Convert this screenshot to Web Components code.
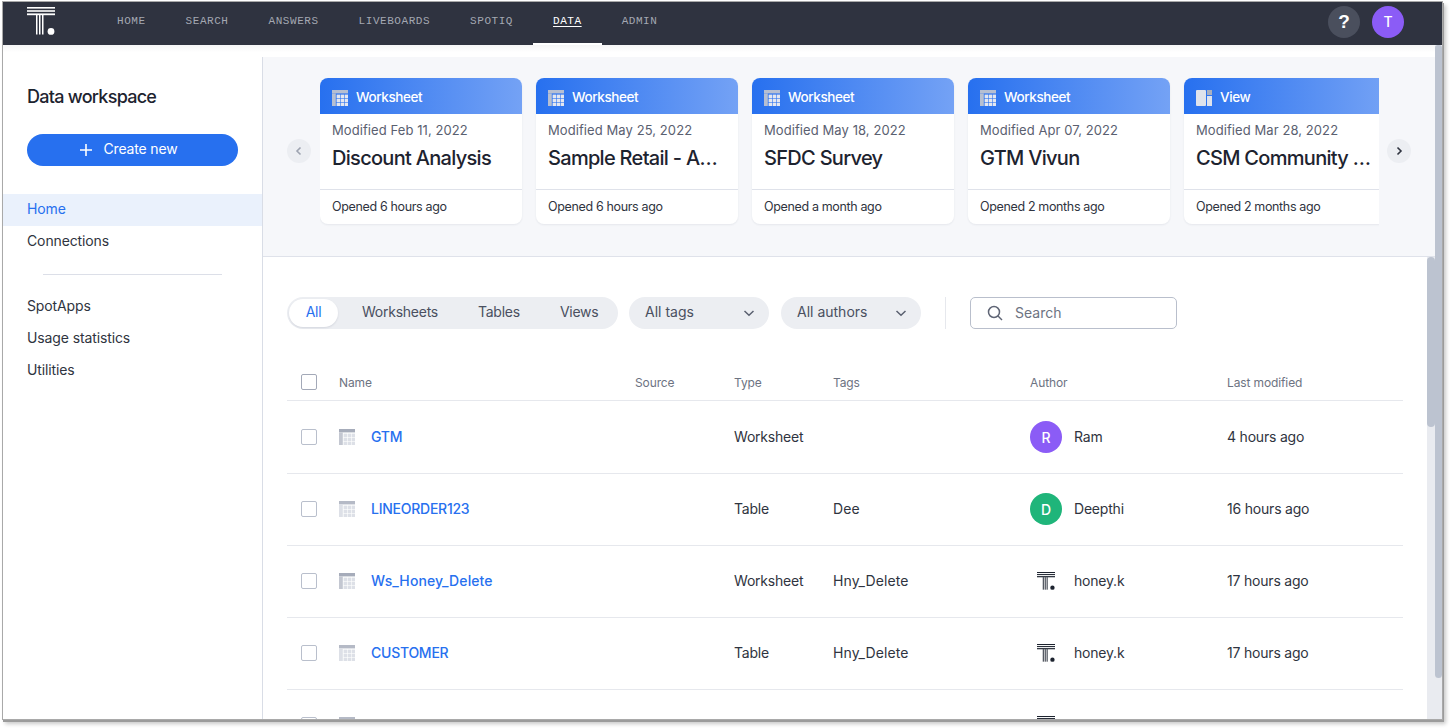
<!DOCTYPE html>
<html lang="en">
<head>
<meta charset="utf-8">
<title>Data workspace</title>
<style>
    html, body {
        margin: 0;
        height: 100%;
        overflow: hidden;
        background: #ffffff;
        font-family: Inter, "Liberation Sans", sans-serif;
        color: #1d232f;
    }
</style>
</head>
<body>
<ts-app>
    <ts-topnav slot="nav" active="DATA"></ts-topnav>
    <ts-sidebar slot="side"></ts-sidebar>
    <ts-carousel slot="top">
        <ts-card kind="Worksheet" modified="Feb 11, 2022" name="Discount Analysis" opened="6 hours ago"></ts-card>
        <ts-card kind="Worksheet" modified="May 25, 2022" name="Sample Retail - Apparel" opened="6 hours ago"></ts-card>
        <ts-card kind="Worksheet" modified="May 18, 2022" name="SFDC Survey" opened="a month ago"></ts-card>
        <ts-card kind="Worksheet" modified="Apr 07, 2022" name="GTM Vivun" opened="2 months ago"></ts-card>
        <ts-card kind="View" modified="Mar 28, 2022" name="CSM Community Activity" opened="2 months ago"></ts-card>
    </ts-carousel>
    <ts-filters slot="list"></ts-filters>
    <ts-table slot="list">
        <ts-row name="GTM" type="Worksheet" author="Ram" initial="R" color="#8b5cf6" modified="4 hours ago"></ts-row>
        <ts-row name="LINEORDER123" type="Table" tags="Dee" author="Deepthi" initial="D" color="#1fb57a" modified="16 hours ago"></ts-row>
        <ts-row style="--name-spacing: 0.1px" name="Ws_Honey_Delete" type="Worksheet" tags="Hny_Delete" author="honey.k" modified="17 hours ago"></ts-row>
        <ts-row name="CUSTOMER" type="Table" tags="Hny_Delete" author="honey.k" modified="17 hours ago"></ts-row>
        <ts-row type="Table"></ts-row>
    </ts-table>
</ts-app>

<script>
const logoSvg = (size) => `
    <svg width="${size}" height="${size}" viewBox="0 0 28 28" fill="currentColor" aria-hidden="true">
        <rect x="0" y="0" width="28" height="1.6"/>
        <rect x="0" y="3.2" width="28" height="1.6"/>
        <rect x="0" y="6.4" width="28" height="1.8"/>
        <rect x="9" y="8" width="1.5" height="19.5"/>
        <rect x="12" y="8" width="1.5" height="19.5"/>
        <rect x="15" y="8" width="1.5" height="19.5"/>
        <circle cx="24" cy="24.4" r="3.4"/>
    </svg>`;

const tableSvg = (bar, side, cell) => `
    <svg width="16" height="16" viewBox="0 0 16 16" aria-hidden="true">
        <rect x="0" y="0" width="16" height="3.4" fill="${bar}"/>
        <rect x="0" y="3.4" width="3.8" height="12.6" fill="${side}"/>
        ${[4.6, 8.6, 12.6].map((y) => [4.6, 8.6, 12.6].map((x) => `
            <rect x="${x}" y="${y}" width="3.4" height="3.4" fill="${cell}"/>`).join("")).join("")}
    </svg>`;

class TsApp extends HTMLElement {
    constructor() {
        super();
        this.attachShadow({ mode: "open" });
    }

    connectedCallback() {
        this.shadowRoot.innerHTML = `
            <style>
                :host {
                    display: flex;
                    flex-direction: column;
                    width: 1439px;
                    height: 717px;
                    margin: 2px 0 0 3px;
                    overflow: hidden;
                    background: #ffffff;
                    box-shadow: 0 0 0 1px #a9a9a9, 1px 2px 0 1px #9b9b9b, 3px 4px 4px 1px rgba(0,0,0,0.22);
                }
                .body { flex: 1; display: flex; min-height: 0; }
                .content { flex: 1; display: flex; flex-direction: column; min-width: 0; }
                .band {
                    height: 12px;
                    flex: none;
                    background: linear-gradient(#f5f5f6, #ffffff 60%);
                }
                .columns { flex: 1; display: flex; min-height: 0; }
                .main { flex: 1; display: flex; flex-direction: column; min-width: 0; }
                .lower { flex: 1; display: flex; min-height: 0; }
                .list { flex: 1; min-width: 0; padding: 40px 24px 0; overflow: hidden; }
                .track { width: 8px; flex: none; background: #e9ebf0; }
                .thumb { background: #bcc3d0; border-radius: 4px; }
                .track.inner .thumb { height: 170px; }
                .track.outer { width: 7px; }
                .track.outer .thumb { height: 633px; margin-top: 0; border-radius: 3px 3px 4px 4px; }
            </style>
            <slot name="nav"></slot>
            <div class="body">
                <div class="content">
                    <div class="band"></div>
                    <div class="columns">
                        <slot name="side"></slot>
                        <div class="main">
                            <slot name="top"></slot>
                            <div class="lower">
                                <div class="list"><slot name="list"></slot></div>
                                <div class="track inner"><div class="thumb"></div></div>
                            </div>
                        </div>
                    </div>
                </div>
                <div class="track outer"><div class="thumb"></div></div>
            </div>
        `;
    }
}

class TsTopnav extends HTMLElement {
    constructor() {
        super();
        this.attachShadow({ mode: "open" });
    }

    connectedCallback() {
        const active = this.getAttribute("active");
        const items = ["HOME", "SEARCH", "ANSWERS", "LIVEBOARDS", "SPOTIQ", "DATA", "ADMIN"];
        this.shadowRoot.innerHTML = `
            <style>
                :host {
                    display: flex;
                    align-items: center;
                    flex: none;
                    height: 43px;
                    background: #2f3340;
                    padding: 0 38px 0 24px;
                }
                .logo { color: #ffffff; display: flex; margin-top: -5px; }
                nav { display: flex; height: 100%; margin-left: 42px; flex: 1; }
                a {
                    display: flex;
                    align-items: center;
                    padding: 0 20px 5px;
                    box-sizing: border-box;
                    height: 100%;
                    font: 11px "Liberation Mono", monospace;
                    letter-spacing: 0.55px;
                    color: #a4a8b2;
                    text-decoration: none;
                }
                a.active {
                    color: #ffffff;
                    box-shadow: inset 0 -2px 0 #ffffff;
                }
                a.active span { text-decoration: underline; text-underline-offset: 2px; }
                .round {
                    width: 32px;
                    height: 32px;
                    border-radius: 50%;
                    display: flex;
                    align-items: center;
                    justify-content: center;
                    color: #ffffff;
                    margin-top: -4px;
                }
                .help { background: #4a4f5d; font: 700 19px "Liberation Sans", sans-serif; margin-right: 12px; }
                .user { background: #8b5cf6; font: 500 14px Inter, sans-serif; }
            </style>
            <div class="logo">${logoSvg(28)}</div>
            <nav>
                ${items.map((item) => `
                    <a href="#" class="${item === active ? "active" : ""}"><span>${item}</span></a>
                `).join("")}
            </nav>
            <div class="round help">?</div>
            <div class="round user">T</div>
        `;
    }
}

class TsSidebar extends HTMLElement {
    constructor() {
        super();
        this.attachShadow({ mode: "open" });
    }

    connectedCallback() {
        this.shadowRoot.innerHTML = `
            <style>
                :host {
                    display: block;
                    flex: none;
                    box-sizing: border-box;
                    width: 260px;
                    height: 100%;
                    border-right: 1px solid #d9dde6;
                    background: #ffffff;
                    padding-top: 28px;
                }
                h1 {
                    margin: 0 0 25px 24px;
                    font-size: 18px;
                    line-height: 24px;
                    font-weight: 500;
                    letter-spacing: -0.73px;
                    color: #1d232f;
                }
                button {
                    display: flex;
                    align-items: center;
                    justify-content: center;
                    gap: 10px;
                    width: 211px;
                    height: 32px;
                    margin: 0 0 28px 24px;
                    padding: 0 8px 4px 0;
                    border: 0;
                    border-radius: 16px;
                    background: #2770ef;
                    color: #ffffff;
                    font: 14px Inter, sans-serif;
                    letter-spacing: -0.15px;
                }
                button svg { margin-top: 4px; }
                a {
                    display: flex;
                    align-items: center;
                    box-sizing: border-box;
                    height: 32px;
                    padding: 0 0 4px 24px;
                    font-size: 14px;
                    letter-spacing: -0.12px;
                    color: #2f3440;
                    text-decoration: none;
                }
                a.active { background: #eaf1fc; color: #2770ef; }
                hr {
                    width: 179px;
                    height: 1px;
                    margin: 16px 0 16px 40px;
                    border: 0;
                    background: #dcdfe8;
                }
            </style>
            <h1>Data workspace</h1>
            <button>
                <svg width="14" height="14" viewBox="0 0 14 14" fill="none" stroke="#ffffff" stroke-width="1.6"><path d="M7 1v12M1 7h12"/></svg>
                <span>Create new</span>
            </button>
            <a class="active" href="#">Home</a>
            <a href="#">Connections</a>
            <hr>
            <a href="#">SpotApps</a>
            <a href="#">Usage statistics</a>
            <a href="#">Utilities</a>
        `;
    }
}

class TsCarousel extends HTMLElement {
    constructor() {
        super();
        this.attachShadow({ mode: "open" });
    }

    connectedCallback() {
        const chevron = (d, color) => `<svg width="10" height="10" viewBox="0 0 10 10" fill="none" stroke="${color}" stroke-width="1.6"><path d="${d}"/></svg>`;
        this.shadowRoot.innerHTML = `
            <style>
                :host {
                    display: flex;
                    align-items: center;
                    flex: none;
                    box-sizing: border-box;
                    height: 200px;
                    padding: 0 0 11px 24px;
                    background: #f6f7fa;
                    border-bottom: 1px solid #dfe2ea;
                }
                .nav {
                    width: 24px;
                    height: 24px;
                    flex: none;
                    border-radius: 50%;
                    background: #eceef2;
                    display: flex;
                    align-items: center;
                    justify-content: center;
                }
                .prev { margin-right: 9px; }
                .next { margin-left: 8px; }
                .view {
                    display: flex;
                    gap: 14px;
                    width: 1059px;
                    padding: 4px 0;
                    overflow: hidden;
                    flex: none;
                }
            </style>
            <div class="nav prev">${chevron("M6.5 1.5 3 5l3.5 3.5", "#9da3b0")}</div>
            <div class="view"><slot></slot></div>
            <div class="nav next">${chevron("M3.5 1.5 7 5 3.5 8.5", "#2f3440")}</div>
        `;
    }
}

class TsCard extends HTMLElement {
    constructor() {
        super();
        this.attachShadow({ mode: "open" });
    }

    connectedCallback() {
        const kind = this.getAttribute("kind");
        const icon = kind === "View"
            ? `<svg width="16" height="16" viewBox="0 0 16 16" aria-hidden="true">
                   <rect x="0" y="0" width="10" height="16" rx="1" fill="#dfe3ec"/>
                   <rect x="11" y="0" width="5" height="5" fill="#a9b0bf"/>
                   <rect x="11" y="6" width="5" height="10" fill="#dfe3ec"/>
               </svg>`
            : tableSvg("#b6bfd2", "#b6bfd2", "#e4e7f0");
        this.shadowRoot.innerHTML = `
            <style>
                :host {
                    display: flex;
                    flex-direction: column;
                    flex: none;
                    box-sizing: border-box;
                    width: 202px;
                    height: 146px;
                    background: #ffffff;
                    border-radius: 8px;
                    overflow: hidden;
                    box-shadow: 0 1px 2px rgba(40,50,80,0.08);
                }
                header {
                    display: flex;
                    align-items: center;
                    flex: none;
                    gap: 8px;
                    box-sizing: border-box;
                    height: 36px;
                    padding: 4px 0 0 12px;
                    background: linear-gradient(90deg, #2770ef, #74a2f5);
                    color: #ffffff;
                    font-size: 13.5px;
                    font-weight: 500;
                    letter-spacing: -0.4px;
                }
                header span { margin-top: -2px; }
                svg { flex: none; }
                .info { flex: 1; padding: 8px 12px 0; min-width: 0; }
                .modified { font-size: 13px; line-height: 16px; letter-spacing: 0.08px; color: #5a6070; }
                .name {
                    margin-top: 6px;
                    font-size: 20px;
                    line-height: 28px;
                    font-weight: 500;
                    letter-spacing: -0.7px;
                    color: #1d232f;
                    white-space: nowrap;
                    overflow: hidden;
                    text-overflow: ellipsis;
                }
                footer {
                    flex: none;
                    box-sizing: border-box;
                    height: 35px;
                    padding: 0 0 2px 12px;
                    display: flex;
                    align-items: center;
                    border-top: 1px solid #dfe2ea;
                    font-size: 12.5px;
                    letter-spacing: -0.35px;
                    color: #2f3440;
                }
            </style>
            <header>${icon}<span>${kind}</span></header>
            <div class="info">
                <div class="modified">Modified ${this.getAttribute("modified")}</div>
                <div class="name">${this.getAttribute("name")}</div>
            </div>
            <footer>Opened ${this.getAttribute("opened")}</footer>
        `;
    }
}

class TsFilters extends HTMLElement {
    constructor() {
        super();
        this.attachShadow({ mode: "open" });
    }

    connectedCallback() {
        const caret = `<svg width="12" height="12" viewBox="0 0 12 12" fill="none" stroke="#5a6070" stroke-width="1.5"><path d="M1.5 4 6 8.2 10.5 4"/></svg>`;
        this.shadowRoot.innerHTML = `
            <style>
                :host {
                    display: flex;
                    align-items: center;
                    height: 32px;
                    font-size: 14px;
                    color: #4a5060;
                }
                .segments {
                    display: flex;
                    align-items: center;
                    flex: none;
                    width: 331px;
                    height: 32px;
                    box-sizing: border-box;
                    padding-left: 2px;
                    background: #eceef2;
                    border-radius: 16px;
                    letter-spacing: -0.25px;
                }
                .segments span { flex: none; margin: -4px 40px 0 0; }
                .segments span:last-child { margin-right: 0; }
                .segments .on {
                    box-sizing: border-box;
                    width: 49px;
                    height: 28px;
                    margin: 0 24px 0 0;
                    padding-bottom: 4px;
                    display: flex;
                    align-items: center;
                    justify-content: center;
                    background: #ffffff;
                    border-radius: 14px;
                    color: #2770ef;
                    box-shadow: 0 1px 2px rgba(40,50,80,0.12);
                }
                .pill {
                    display: flex;
                    align-items: center;
                    justify-content: space-between;
                    flex: none;
                    box-sizing: border-box;
                    width: 140px;
                    height: 32px;
                    margin-left: 12px;
                    padding: 0 14px 0 16px;
                    background: #eceef2;
                    border-radius: 16px;
                }
                .pill span { margin-top: -4px; }
                .pill.first { margin-left: 11px; }
                .rule { width: 1px; height: 32px; margin: 0 24px; background: #e6e8ed; }
                .search {
                    display: flex;
                    align-items: center;
                    gap: 12px;
                    box-sizing: border-box;
                    width: 207px;
                    height: 32px;
                    padding-left: 16px;
                    border: 1px solid #b9bfcc;
                    border-radius: 5px;
                    color: #6d7382;
                }
                .search span { margin-top: -2px; }
            </style>
            <div class="segments">
                <span class="on">All</span>
                <span>Worksheets</span>
                <span>Tables</span>
                <span>Views</span>
            </div>
            <div class="pill first"><span>All tags</span>${caret}</div>
            <div class="pill"><span>All authors</span>${caret}</div>
            <div class="rule"></div>
            <div class="search">
                <svg width="16" height="16" viewBox="0 0 16 16" fill="none" stroke="#5f6575" stroke-width="1.5"><circle cx="7" cy="7" r="5.5"/><path d="m11 11 4 4"/></svg>
                <span>Search</span>
            </div>
        `;
    }
}

// both the header and the rows use this column list
const tableColumns = "38px 296px 99px 99px 197px 197px 1fr";

class TsTable extends HTMLElement {
    constructor() {
        super();
        this.attachShadow({ mode: "open" });
    }

    connectedCallback() {
        const heads = ["Name", "Source", "Type", "Tags", "Author", "Last modified"];
        this.shadowRoot.innerHTML = `
            <style>
                :host { display: block; margin-top: 32px; }
                .head {
                    display: grid;
                    grid-template-columns: ${tableColumns};
                    align-items: center;
                    height: 37px;
                    padding: 2px 0 0 14px;
                    margin-bottom: 1px;
                    border-bottom: 1px solid #e6e8ed;
                    font-size: 12px;
                    letter-spacing: -0.12px;
                    color: #6d7382;
                }
                .head div:not(.box) { padding-top: 1px; }
                .box {
                    width: 16px;
                    height: 16px;
                    box-sizing: border-box;
                    border: 1.5px solid #a3a9b8;
                    border-radius: 2px;
                }
            </style>
            <div class="head">
                <div class="box"></div>
                ${heads.map((head) => `<div>${head}</div>`).join("")}
            </div>
            <slot></slot>
        `;
    }
}

class TsRow extends HTMLElement {
    constructor() {
        super();
        this.attachShadow({ mode: "open" });
    }

    connectedCallback() {
        const initial = this.getAttribute("initial");
        const avatar = initial
            ? `<div class="avatar" style="background:${this.getAttribute("color")}">${initial}</div>`
            : `<div class="avatar logo">${logoSvg(18)}</div>`;
        const isSheet = this.getAttribute("type") === "Worksheet";
        const name = this.getAttribute("name");
        this.shadowRoot.innerHTML = `
            <style>
                :host {
                    display: grid;
                    grid-template-columns: ${tableColumns};
                    align-items: center;
                    height: 70px;
                    padding: 0 0 1px 14px;
                    border-bottom: 1px solid #e6e8ed;
                    font-size: 14px;
                    letter-spacing: -0.2px;
                    color: #2f3440;
                }
                .box {
                    width: 16px;
                    height: 16px;
                    box-sizing: border-box;
                    border: 1.5px solid #b9bfcc;
                    border-radius: 2px;
                }
                .text { margin-top: -2px; }
                .tags { letter-spacing: 0.1px; }
                .name { display: flex; align-items: center; gap: 16px; }
                .name svg { flex: none; }
                .name a {
                    margin-top: -2px;
                    color: #2770ef;
                    font-weight: 500;
                    text-decoration: none;
                    letter-spacing: var(--name-spacing, -0.25px);
                }
                .author { display: flex; align-items: center; gap: 12px; }
                .author span { margin-top: -2px; }
                .avatar {
                    width: 32px;
                    height: 32px;
                    border-radius: 50%;
                    display: flex;
                    align-items: center;
                    justify-content: center;
                    color: #ffffff;
                    font-weight: 500;
                }
                .avatar.logo { color: #1d232f; }
            </style>
            <div class="box"></div>
            <div class="name">
                ${isSheet ? tableSvg("#a6acba", "#c3c7d1", "#dde0e7") : tableSvg("#b5bac6", "#dde0e7", "#dde0e7")}
                ${name ? `<a href="#">${name}</a>` : ""}
            </div>
            <div></div>
            <div class="text">${name ? this.getAttribute("type") : ""}</div>
            <div class="text tags">${this.getAttribute("tags") || ""}</div>
            <div class="author">${avatar}<span>${this.getAttribute("author") || ""}</span></div>
            <div class="text">${this.getAttribute("modified") || ""}</div>
        `;
    }
}

customElements.define("ts-app", TsApp);
customElements.define("ts-topnav", TsTopnav);
customElements.define("ts-sidebar", TsSidebar);
customElements.define("ts-carousel", TsCarousel);
customElements.define("ts-card", TsCard);
customElements.define("ts-filters", TsFilters);
customElements.define("ts-table", TsTable);
customElements.define("ts-row", TsRow);
</script>
</body>
</html>
